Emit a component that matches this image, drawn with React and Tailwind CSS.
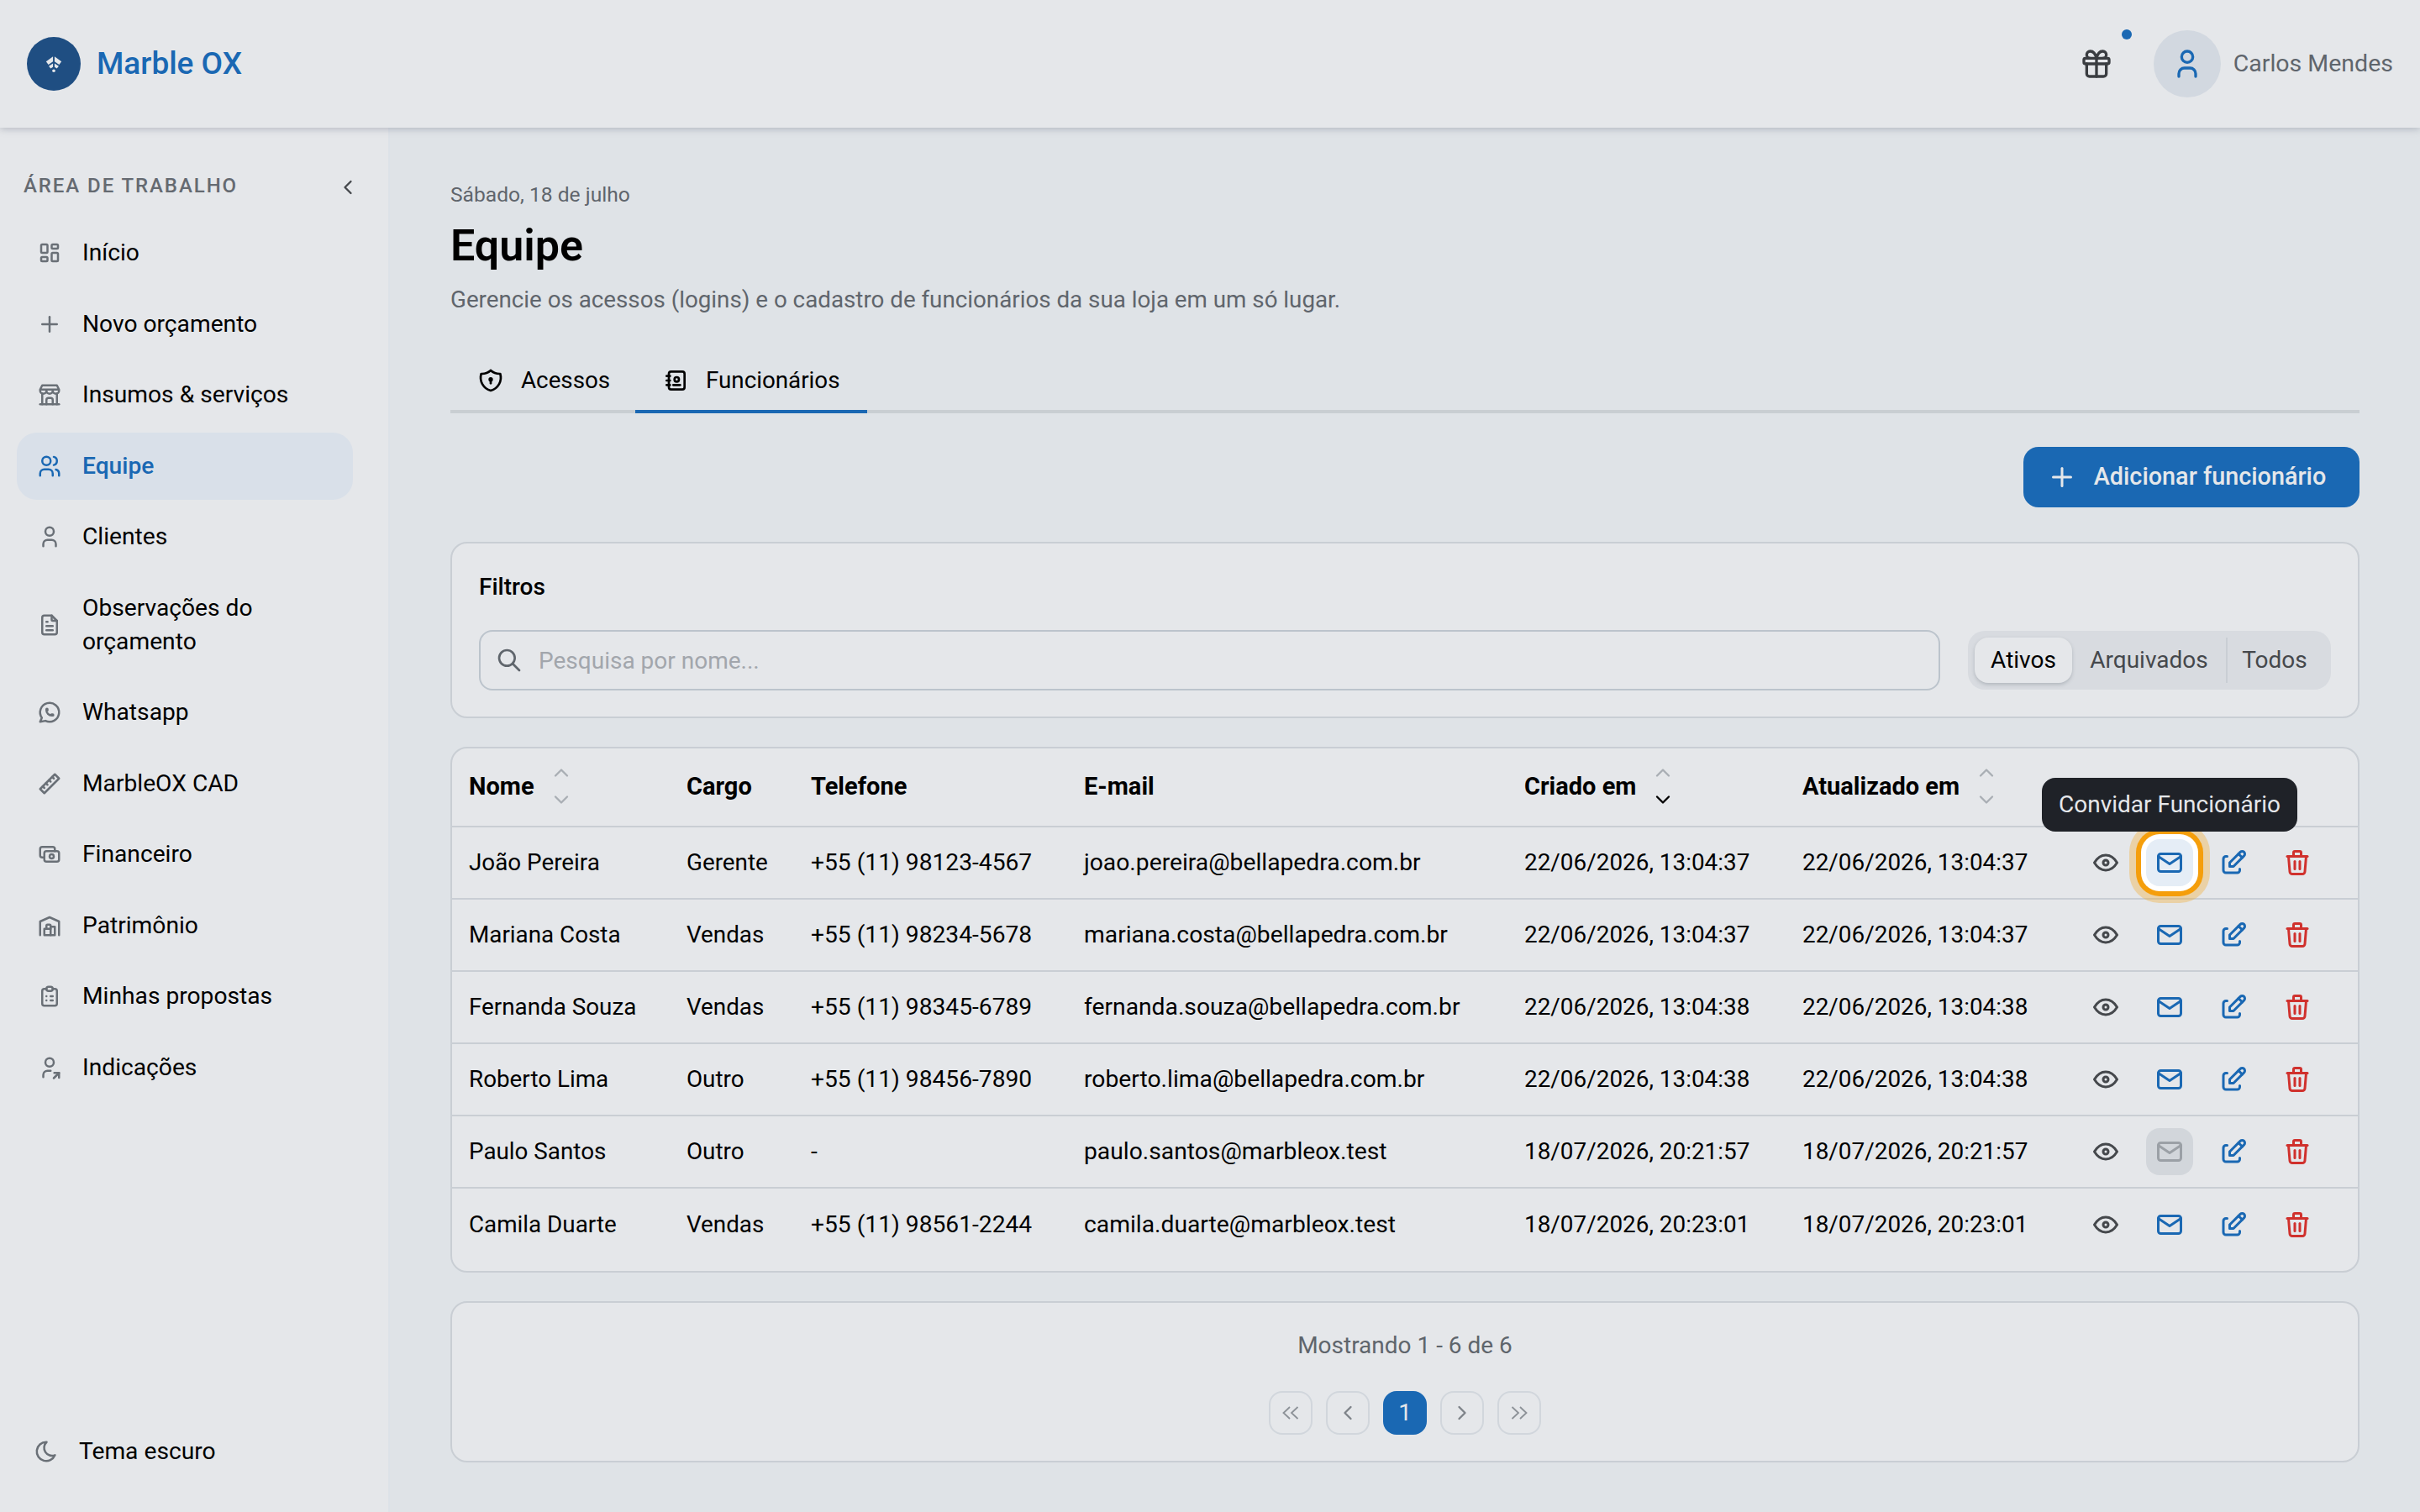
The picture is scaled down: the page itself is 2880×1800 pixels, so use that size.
import React from 'react';
import {
  TbLayoutDashboard, TbPlus, TbBuildingStore, TbUsers, TbUser, TbFileText, TbBrandWhatsapp, TbRuler2, TbCash,
  TbBuildingWarehouse, TbClipboardList, TbUserShare, TbMoon, TbGift, TbMail, TbEye, TbEdit, TbTrash, TbAddressBook,
  TbShieldLock, TbSearch, TbChevronLeft, TbChevronRight, TbChevronUp, TbChevronDown,
} from 'react-icons/tb';

const NAV = [
  { label: 'Início', icon: TbLayoutDashboard },
  { label: 'Novo orçamento', icon: TbPlus },
  { label: 'Insumos & serviços', icon: TbBuildingStore },
  { label: 'Equipe', icon: TbUsers, active: true },
  { label: 'Clientes', icon: TbUser },
  { label: 'Observações do orçamento', icon: TbFileText },
  { label: 'Whatsapp', icon: TbBrandWhatsapp },
  { label: 'MarbleOX CAD', icon: TbRuler2 },
  { label: 'Financeiro', icon: TbCash },
  { label: 'Patrimônio', icon: TbBuildingWarehouse },
  { label: 'Minhas propostas', icon: TbClipboardList },
  { label: 'Indicações', icon: TbUserShare },
];

const ROWS = [
  ['João Pereira', 'Gerente', '+55 (11) 98123-4567', 'joao.pereira@bellapedra.com.br', '22/06/2026, 13:04:37', '22/06/2026, 13:04:37'],
  ['Mariana Costa', 'Vendas', '+55 (11) 98234-5678', 'mariana.costa@bellapedra.com.br', '22/06/2026, 13:04:37', '22/06/2026, 13:04:37'],
  ['Fernanda Souza', 'Vendas', '+55 (11) 98345-6789', 'fernanda.souza@bellapedra.com.br', '22/06/2026, 13:04:38', '22/06/2026, 13:04:38'],
  ['Roberto Lima', 'Outro', '+55 (11) 98456-7890', 'roberto.lima@bellapedra.com.br', '22/06/2026, 13:04:38', '22/06/2026, 13:04:38'],
  ['Paulo Santos', 'Outro', '-', 'paulo.santos@marbleox.test', '18/07/2026, 20:21:57', '18/07/2026, 20:21:57'],
  ['Camila Duarte', 'Vendas', '+55 (11) 98561-2244', 'camila.duarte@marbleox.test', '18/07/2026, 20:23:01', '18/07/2026, 20:23:01'],
];

const COLS = ['w-[259px]', 'w-[148px]', 'w-[325px]', 'w-[524px]', 'w-[331px]', 'w-[338px]'];
const CELL_TEXT = ['text-[27.800px]', 'text-[27.800px]', 'text-[28.200px]', 'text-[28.250px]', 'text-[27.900px]', 'text-[27.900px]'];

function Logo() {
  return (
    <div className="w-16 h-16 rounded-full bg-[#1f4e82] flex items-center justify-center">
      <svg viewBox="0 0 24 24" className="w-[22px] h-[22px]" fill="#e5e7ea">
        <path d="M11 2.500L2 9l3 4 6-4z" />
        <path d="M13 2.500L22 9l-3 4-6-4z" />
        <path d="M11 11.500L5.500 15l2.500 3 3-2z" />
        <path d="M13 11.500l5.500 3.500-2.500 3-3-2z" />
        <circle cx="12" cy="21" r="2" />
      </svg>
    </div>
  );
}

function DoubleChevron({ right }) {
  return (
    <svg viewBox="0 0 20 16" className={right ? 'w-5 h-4 rotate-180' : 'w-5 h-4'} fill="none" stroke="#8c9197" strokeWidth="1.800">
      <path d="M9 1L1.500 8 9 15" />
      <path d="M18.500 1L11 8l7.500 7" />
    </svg>
  );
}

function SortHeader({ label, width, down }) {
  return (
    <div className={`${width} flex items-center gap-[18px] shrink-0 pl-5`}>
      <span className="font-bold text-[29px] text-black">{label}</span>
      <span className="flex flex-col gap-1 -mt-[3px] text-[#a9aeb4]">
        <TbChevronUp className="w-7 h-7" />
        <TbChevronDown className={down ? 'w-7 h-7 text-black' : 'w-7 h-7'} />
      </span>
    </div>
  );
}

function Row({ row, idx }) {
  const focused = idx === 0;
  const disabled = idx === 4;
  const last = idx === ROWS.length - 1;
  return (
    <div className={last ? 'h-[86px] flex items-center text-black' : 'h-[86px] flex items-center border-b-2 border-[#c9ced4] text-black'}>
      {row.map((cell, i) => (
        <div key={i} className={`${COLS[i]} ${CELL_TEXT[i]} shrink-0 pl-5 whitespace-nowrap`}>{cell}</div>
      ))}
      <div className="flex items-center gap-5 pl-[15px]">
        <button className="w-14 h-14 flex items-center justify-center text-[#45484c]"><TbEye className="w-9 h-9" /></button>
        {focused ? (
          <button className="w-14 h-14 rounded-2xl flex items-center justify-center bg-[#e5edf6] text-[#1a68b3] shadow-[0_0_0_6px_#ffffff,0_0_0_12px_#f59e0b,0_0_0_20px_rgba(245,158,11,0.3)]"><TbMail className="w-9 h-9" /></button>
        ) : disabled ? (
          <button className="w-14 h-14 rounded-2xl flex items-center justify-center bg-[#d2d6db] text-[#9ba0a6]"><TbMail className="w-9 h-9" /></button>
        ) : (
          <button className="w-14 h-14 flex items-center justify-center text-[#1a68b3]"><TbMail className="w-9 h-9" /></button>
        )}
        <button className="w-14 h-14 flex items-center justify-center text-[#1a68b3]"><TbEdit className="w-9 h-9" /></button>
        <button className="w-14 h-14 flex items-center justify-center text-[#d0312d]"><TbTrash className="w-9 h-9" /></button>
      </div>
    </div>
  );
}

function PageBtn({ children, active }) {
  return (
    <button className={active
      ? 'w-[52px] h-[52px] rounded-2xl bg-[#1a68b3] text-[#e5e7ea] text-[28px] flex items-center justify-center'
      : 'w-[52px] h-[52px] rounded-2xl border-2 border-[#d1d6dc] text-[#7e8389] flex items-center justify-center'}>
      {children}
    </button>
  );
}

export default function App() {
  return (
    <div className="h-[1800px] flex flex-col overflow-hidden bg-[#dfe3e7] font-['Roboto',sans-serif] text-[28px]">
      <header className="relative z-10 h-[152px] shrink-0 bg-[#e5e7ea] shadow-[0_2px_8px_rgba(100,110,125,0.35)] flex items-center justify-between pl-8 pr-[32px]">
        <div className="flex items-center gap-[19px]">
          <Logo />
          <span className="text-[37px] font-medium text-[#1a68b3]">Marble OX</span>
        </div>
        <div className="flex items-center">
          <div className="relative w-[68px] h-[68px] flex items-center justify-center mr-[34px] text-[#3a3d41]">
            <TbGift className="w-10 h-10" />
            <span className="absolute top-[-7px] right-[-8px] w-3 h-3 rounded-full bg-[#1a68b3]" />
          </div>
          <div className="w-20 h-20 rounded-full bg-[#d2d8e0] flex items-center justify-center text-[#1a68b3]">
            <TbUser className="w-10 h-10" />
          </div>
          <span className="ml-[15px] text-[28.500px] text-[#5f656c]">Carlos Mendes</span>
        </div>
      </header>

      <div className="flex flex-1 min-h-0">
        <aside className="w-[464px] shrink-0 bg-[#e5e7ea] border-r-2 border-[#dde2e8] flex flex-col pl-5 pr-[42px] text-[28.200px]">
          <div className="flex items-center justify-between pl-2 mt-[54px] mb-[25px] h-[30px]">
            <span className="text-[24px] font-medium tracking-[0.08em] text-[#656a71]">ÁREA DE TRABALHO</span>
            <TbChevronLeft className="w-7 h-7 text-[#45484c] mr-[-8px] mt-1" />
          </div>
          <nav className="flex flex-col gap-[4.500px]">
            {NAV.map((item) => {
              const Icon = item.icon;
              return (
                <a key={item.label} className={item.active
                  ? 'min-h-[80px] rounded-3xl bg-[#d9e0e9] flex items-center gap-6 pl-6 pr-4 font-medium text-[#1a68b3]'
                  : 'min-h-[80px] rounded-3xl flex items-center gap-6 pl-6 pr-4 text-black'}>
                  <Icon className={item.active ? 'w-[30px] h-[30px] shrink-0' : 'w-[30px] h-[30px] shrink-0 text-[#6a7077]'} />
                  <span className={item.label.length > 20 ? 'leading-[40px] py-5' : 'leading-[40px]'}>{item.label}</span>
                </a>
              );
            })}
          </nav>
          <div className="mt-auto mb-[51px] flex items-center gap-6 pl-5 text-black">
            <TbMoon className="w-[30px] h-[30px] text-[#6a7077]" />
            <span>Tema escuro</span>
          </div>
        </aside>

        <main className="flex-1 min-w-0 px-[72px] pt-[65px] flex flex-col">
          <p className="text-[24.600px] leading-[30px] text-[#5f656c]">Sábado, 18 de julho</p>
          <h1 className="text-[52px] leading-[62px] font-semibold text-black mt-[15px]">Equipe</h1>
          <p className="text-[27.750px] leading-[40px] text-[#5f656c] mt-[13px]">Gerencie os acessos (logins) e o cadastro de funcionários da sua loja em um só lugar.</p>

          <div className="flex mt-10 border-b-4 border-[#c9ced2] h-[75px] text-[27.750px]">
            <div className="w-[220px] flex items-center gap-5 pl-8 text-black">
              <TbShieldLock className="w-8 h-8" />
              <span>Acessos</span>
            </div>
            <div className="w-[276px] flex items-center gap-5 pl-8 text-black border-b-4 border-[#1a68b3] -mb-1">
              <TbAddressBook className="w-8 h-8" />
              <span>Funcionários</span>
            </div>
          </div>

          <div className="flex justify-end mt-10">
            <button className="w-[400px] h-[72px] rounded-[18px] bg-[#1a68b3] text-[#e5e7ea] text-[28.800px] font-medium flex items-center justify-center gap-5 pr-3">
              <TbPlus className="w-9 h-9" />
              <span>Adicionar funcionário</span>
            </button>
          </div>

          <section className="mt-[41px] h-[210px] rounded-[20px] border-2 border-[#c9ced4] bg-[#e5e7ea] px-8 pt-[34px]">
            <h2 className="font-medium text-black leading-[36px]">Filtros</h2>
            <div className="mt-[33px] flex items-center justify-between">
              <div className="w-[1739px] h-[72px] rounded-2xl border-2 border-[#bcc4cc] flex items-center gap-[19px] pl-[18px]">
                <TbSearch className="w-8 h-8 text-[#5f656c]" />
                <span className="text-[#a2a6ac] mt-[2px]">Pesquisa por nome...</span>
              </div>
              <div className="w-[432px] h-[70px] rounded-[20px] bg-[#d8dbe0] flex items-center pl-2">
                <span className="w-[116px] h-[54px] rounded-2xl bg-[#e5e7ea] shadow-[0_2px_4px_rgba(90,100,110,0.3)] flex items-center justify-center text-black">Ativos</span>
                <span className="w-[183px] flex items-center justify-center text-[#45484c]">Arquivados</span>
                <span className="w-[2px] h-[54px] bg-[#c9ced4]" />
                <span className="w-[112px] flex items-center justify-center text-[#45484c]">Todos</span>
              </div>
            </div>
          </section>

          <section className="relative mt-[34px] h-[626px] rounded-[20px] border-2 border-[#c9ced4] bg-[#e5e7ea]">
            <div className="h-[94px] flex items-center border-b-2 border-[#c9ced4]">
              <SortHeader label="Nome" width={COLS[0]} />
              <div className={`${COLS[1]} shrink-0 pl-5 font-bold text-[29px] text-black`}>Cargo</div>
              <div className={`${COLS[2]} shrink-0 pl-5 font-bold text-[29px] text-black`}>Telefone</div>
              <div className={`${COLS[3]} shrink-0 pl-5 font-bold text-[29px] text-black`}>E-mail</div>
              <SortHeader label="Criado em" width={COLS[4]} down />
              <SortHeader label="Atualizado em" width={COLS[5]} />
              <div className="pl-[30px] pt-[6px] font-bold text-[29px] text-black">Ações</div>
            </div>
            {ROWS.map((row, idx) => <Row key={row[0]} row={row} idx={idx} />)}
            <div className="absolute left-[1892px] top-[35px] z-20 w-[304px] h-16 rounded-2xl bg-[#1f2228] text-[#e5e7ea] flex items-center justify-center">Convidar Funcionário</div>
          </section>

          <section className="mt-[34px] h-[192px] rounded-[20px] border-2 border-[#c9ced4] bg-[#e5e7ea] flex flex-col items-center pt-[31px]">
            <p className="text-[#5f656c] leading-[40px]">Mostrando 1 - 6 de 6</p>
            <div className="flex gap-4 mt-[34px]">
              <PageBtn><DoubleChevron /></PageBtn>
              <PageBtn><TbChevronLeft className="w-7 h-7" /></PageBtn>
              <PageBtn active>1</PageBtn>
              <PageBtn><TbChevronRight className="w-7 h-7" /></PageBtn>
              <PageBtn><DoubleChevron right /></PageBtn>
            </div>
          </section>
        </main>
      </div>
    </div>
  );
}
